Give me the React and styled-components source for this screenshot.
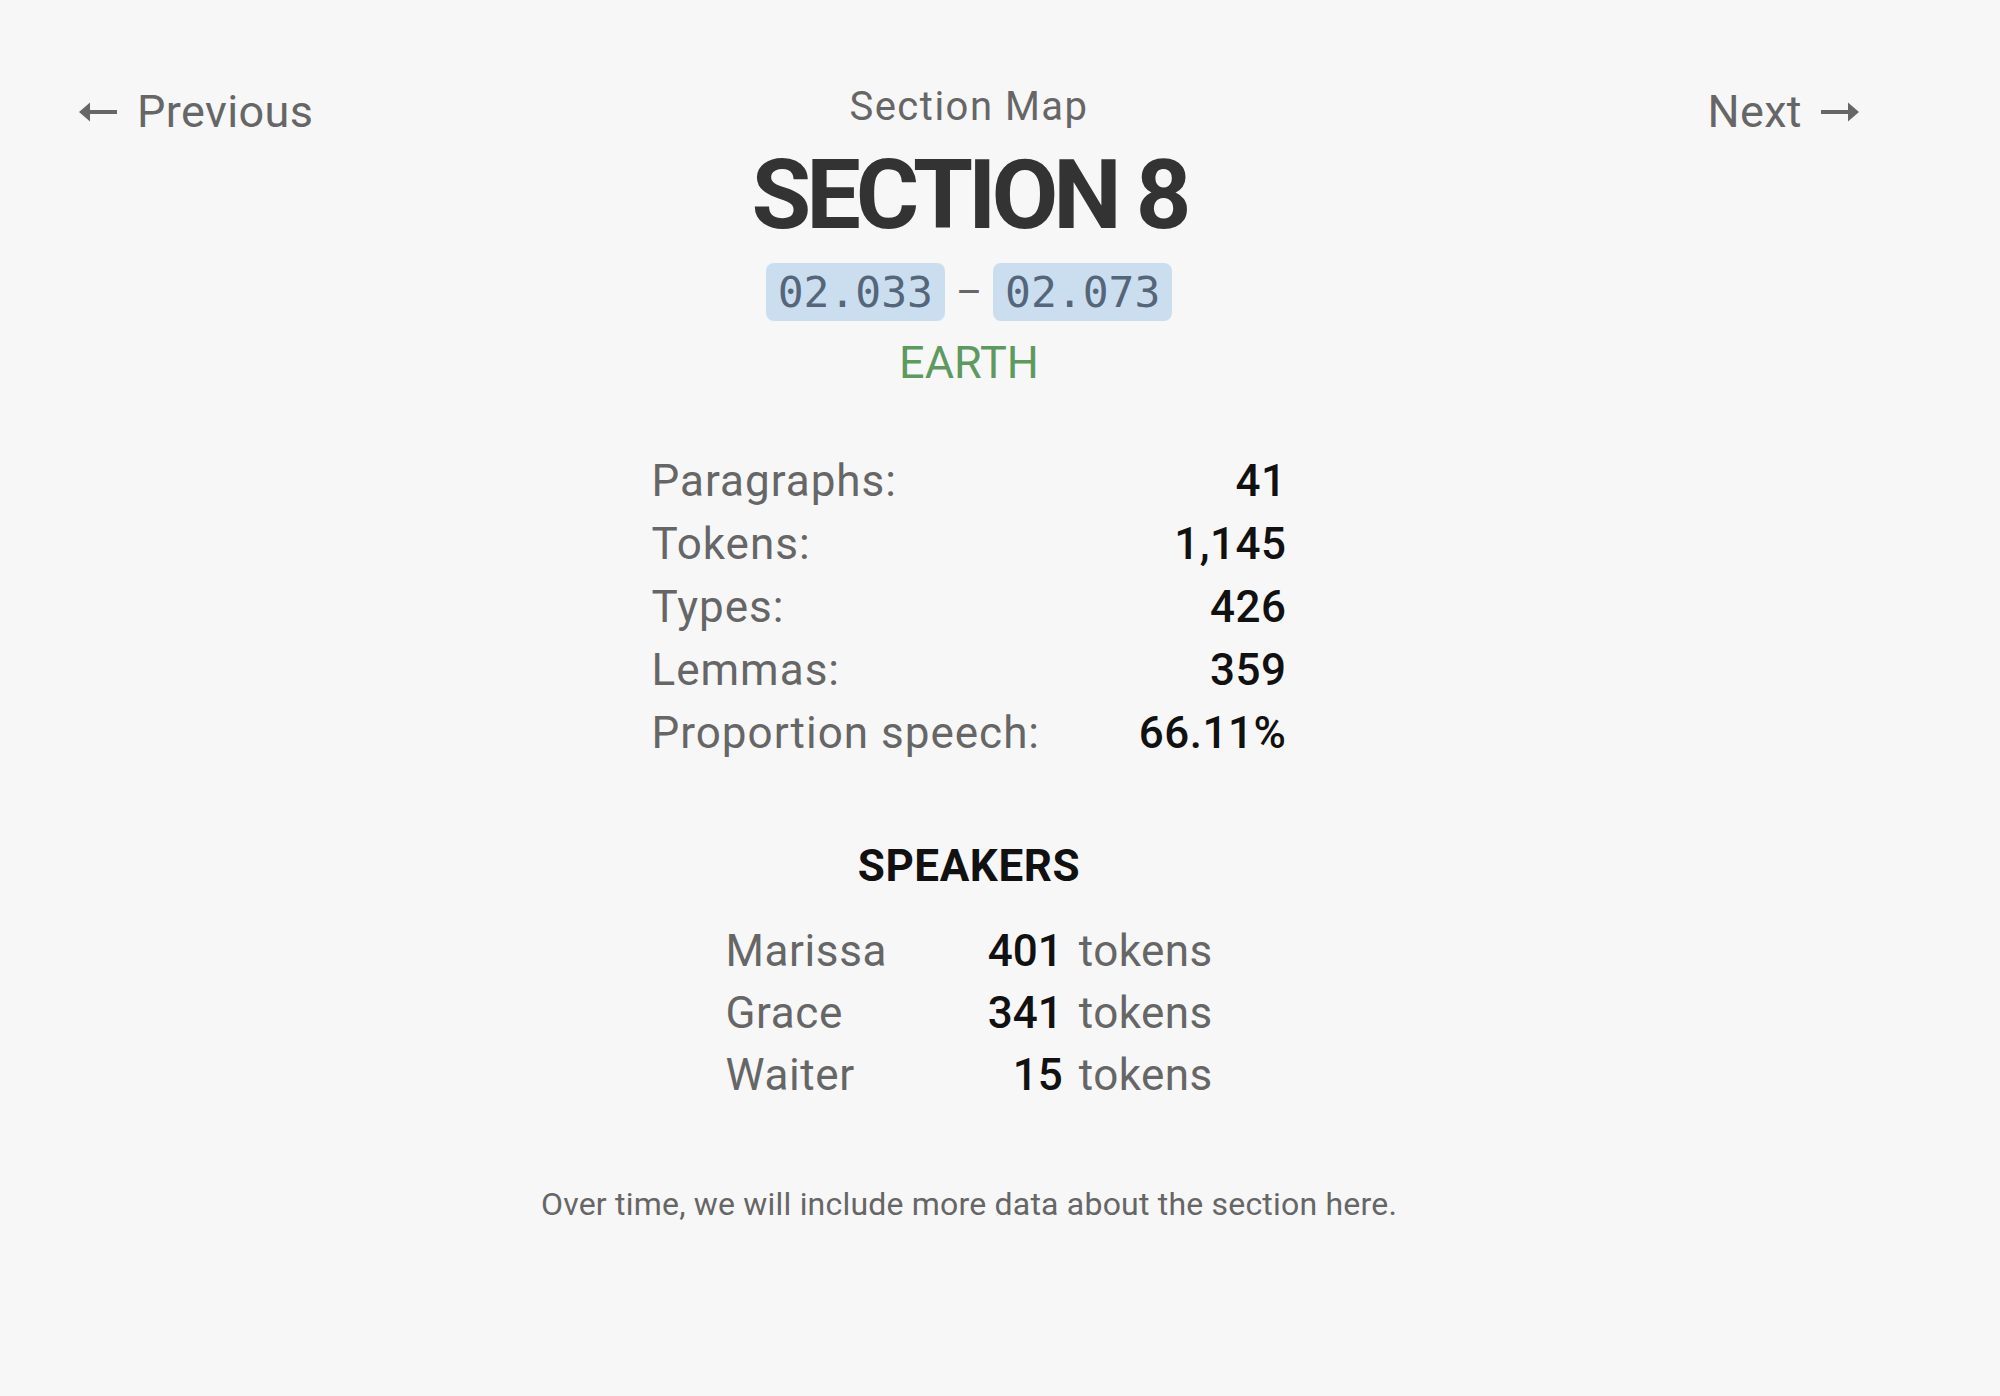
import styled, { createGlobalStyle } from "styled-components";

const GlobalStyle = createGlobalStyle`
  html, body {
    margin: 0;
    background: #f7f7f7;
  }
  body {
    font-family: Roboto, "Liberation Sans", sans-serif;
    color: #666;
  }
`;

const Page = styled.div`
  min-height: 1396px;
  box-sizing: border-box;
  padding: 80px 141px 0 79px;
`;

const Header = styled.header`
  display: grid;
  grid-template-columns: 1fr auto 1fr;
  align-items: start;
`;

const NavLink = styled.a`
  display: flex;
  align-items: center;
  gap: ${(p) => (p.$next ? "19px" : "20px")};
  justify-self: ${(p) => (p.$next ? "end" : "start")};
  margin-top: 5px;
  font-size: 45px;
  line-height: 54px;
  letter-spacing: 0.4px;
  color: #666;
  text-decoration: none;
  cursor: pointer;
`;

const Kicker = styled.div`
  margin-top: 4px;
  font-size: 40px;
  line-height: 46px;
  letter-spacing: 1.5px;
  text-align: center;
  color: #666;
`;

const Main = styled.main`
  display: flex;
  flex-direction: column;
  align-items: center;
`;

const Title = styled.h1`
  margin: 3px 0 0;
  font-size: 97px;
  line-height: 107px;
  font-weight: 700;
  letter-spacing: -5px;
  color: #333;
`;

const Range = styled.div`
  display: flex;
  align-items: center;
  margin-top: 14px;
`;

const Code = styled.code`
  display: inline-flex;
  align-items: center;
  height: 58px;
  padding: 0 12px;
  border-radius: 8px;
  background: #cbdeef;
  color: #55667a;
  font-family: "DejaVu Sans Mono", "Liberation Mono", monospace;
  font-size: 43px;
`;

const Dash = styled.span`
  width: 48px;
  text-align: center;
  font-size: 40px;
  color: #666;
`;

const Place = styled.div`
  margin-top: 15px;
  font-size: 45px;
  line-height: 54px;
  color: #5e9a5f;
`;

const Stats = styled.dl`
  display: grid;
  grid-template-columns: 1fr auto;
  width: 635px;
  margin: 60px 0 0;
  font-size: 44px;
  line-height: 63px;
`;

const Label = styled.dt`
  color: #666;
  letter-spacing: 1px;
`;

const Value = styled.dd`
  margin: 0;
  text-align: right;
  color: #111;
  font-weight: 500;
  letter-spacing: 0.5px;
`;

const Heading = styled.h2`
  margin: 70px 0 0;
  font-size: 44px;
  line-height: 63px;
  font-weight: 700;
  letter-spacing: 0.6px;
  color: #111;
`;

const Speakers = styled.div`
  display: grid;
  grid-template-columns: 1fr auto auto;
  column-gap: 16px;
  width: 487px;
  margin-top: 22px;
  font-size: 44px;
  line-height: 62px;
`;

const Name = styled.span`
  color: #666;
  letter-spacing: 0.6px;
`;

const Count = styled.span`
  text-align: right;
  color: #111;
  font-weight: 500;
`;

const Unit = styled.span`
  color: #666;
  letter-spacing: 0.4px;
`;

const Note = styled.p`
  margin: 78px 0 0;
  font-size: 32px;
  line-height: 40px;
  letter-spacing: 0.2px;
  color: #666;
`;

function Arrow({ dir }) {
  const flip = dir === "right";
  return (
    <svg
      width="38"
      height="22"
      viewBox="0 0 38 22"
      style={flip ? { transform: "scaleX(-1)" } : undefined}
    >
      <rect x="9" y="9" width="29" height="4" fill="#666" />
      <polygon points="0,11 11,1.5 11,20.5" fill="#666" />
    </svg>
  );
}

const stats = [
  ["Paragraphs:", "41"],
  ["Tokens:", "1,145"],
  ["Types:", "426"],
  ["Lemmas:", "359"],
  ["Proportion speech:", "66.11%"],
];

const speakers = [
  ["Marissa", 401],
  ["Grace", 341],
  ["Waiter", 15],
];

export default function App() {
  return (
    <Page>
      <GlobalStyle />
      <Header>
        <NavLink>
          <Arrow dir="left" />
          Previous
        </NavLink>
        <Kicker>Section Map</Kicker>
        <NavLink $next>
          Next
          <Arrow dir="right" />
        </NavLink>
      </Header>
      <Main>
        <Title>SECTION 8</Title>
        <Range>
          <Code>02.033</Code>
          <Dash>–</Dash>
          <Code>02.073</Code>
        </Range>
        <Place>EARTH</Place>
        <Stats>
          {stats.map(([label, value]) => (
            <>
              <Label key={label}>{label}</Label>
              <Value key={label + "v"}>{value}</Value>
            </>
          ))}
        </Stats>
        <Heading>SPEAKERS</Heading>
        <Speakers>
          {speakers.map(([name, n]) => (
            <>
              <Name key={name}>{name}</Name>
              <Count key={name + "n"}>{n}</Count>
              <Unit key={name + "u"}>tokens</Unit>
            </>
          ))}
        </Speakers>
        <Note>Over time, we will include more data about the section here.</Note>
      </Main>
    </Page>
  );
}
